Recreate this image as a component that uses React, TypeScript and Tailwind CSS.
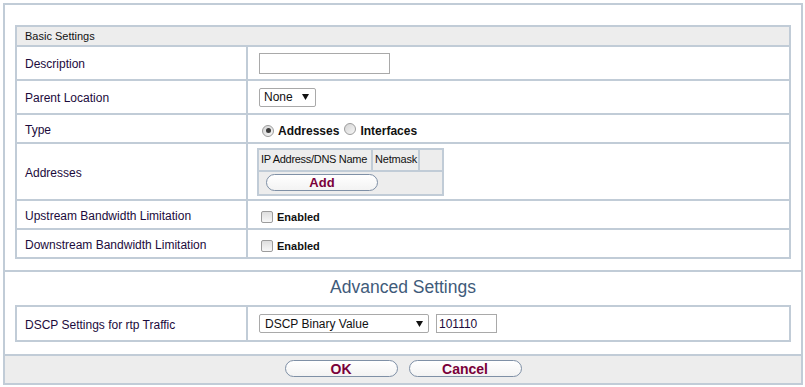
import React from "react";

const B = "bg-[#c1ccd7]";

function Arrow() {
  return (
    <svg width="7" height="6" viewBox="0 0 7 6" className="shrink-0">
      <polygon points="0,0 7,0 3.5,6" fill="#111" />
    </svg>
  );
}

function Radio({ checked }: { checked?: boolean }) {
  return (
    <span className="inline-flex w-[12px] h-[12px] shrink-0 items-center justify-center rounded-full border border-[#9c9c9c] bg-gradient-to-br from-[#d4d4d4] to-[#f6f6f6]">
      {checked && <span className="block w-[5px] h-[5px] rounded-full bg-[#3a3a3a]" />}
    </span>
  );
}

function Checkbox() {
  return (
    <span className="inline-block w-[12px] h-[12px] shrink-0 rounded-[2px] border border-[#9c9c9c] bg-gradient-to-b from-[#dedede] to-[#f8f8f8]" />
  );
}

function Btn({ children, w, cls }: { children: React.ReactNode; w: string; cls?: string }) {
  return (
    <button
      className={`${w} h-[17px] rounded-full border border-[#7f90a6] bg-gradient-to-b from-white to-[#f3f3f3] font-bold text-[#7a0039] leading-none flex items-center justify-center ${cls ?? ""}`}
    >
      {children}
    </button>
  );
}

function Label({ children, h }: { children: React.ReactNode; h: string }) {
  return (
    <div className={`bg-white ${h} flex items-center pl-[8px] pt-[2px] text-[12px] text-[#1c0b3c]`}>{children}</div>
  );
}

export default function App() {
  return (
    <div className="pt-[3px] pl-[3px] font-['Liberation_Sans',Arial,sans-serif] text-[#1c0b3c]">
      <div className="w-[800px] border-2 border-[#c1ccd7] bg-white">
        {/* Basic settings */}
        <div className="px-[10px] pt-[20px] pb-[11px]">
          <div className={`grid grid-cols-[229px_541px] gap-[2px] p-[2px] ${B}`}>
            <div className="col-span-2 h-[18px] bg-[#ededed] flex items-center pl-[8px] text-[11px] text-[#111]">
              Basic Settings
            </div>

            <Label h="h-[32px]">Description</Label>
            <div className="bg-white h-[32px] flex items-center pl-[11px]">
              <input className="w-[131px] h-[21px] border border-[#a9a9a9] bg-white outline-none" />
            </div>

            <Label h="h-[32px]">Parent Location</Label>
            <div className="bg-white h-[32px] flex items-center pl-[11px]">
              <div className="w-[57px] h-[19px] border border-[#a9a9a9] rounded-[2px] bg-white flex items-center justify-between pl-[4px] pr-[6px] text-[12px] text-[#111]">
                <span>None</span>
                <Arrow />
              </div>
            </div>

            <Label h="h-[27px]">Type</Label>
            <div className="bg-white h-[27px] flex items-center pl-[14px] pt-[4px] text-[12px] font-bold text-[#111]">
              <Radio checked />
              <span className="ml-[4px]">Addresses</span>
              <span className="ml-[5px]">
                <Radio />
              </span>
              <span className="ml-[4px]">Interfaces</span>
            </div>

            <Label h="h-[55px]">Addresses</Label>
            <div className="bg-white h-[55px] flex items-center pl-[9px]">
              <div className={`grid grid-cols-[112px_45px_22px] grid-rows-[20px_22px] gap-[2px] p-[2px] ${B}`}>
                <div className="bg-[#ededed] flex items-center pl-[2px] text-[11px] text-[#111] whitespace-nowrap tracking-[-0.3px]">
                  IP Address/DNS Name
                </div>
                <div className="bg-[#ededed] flex items-center pl-[2px] text-[11px] text-[#111] tracking-[-0.2px]">Netmask</div>
                <div className="bg-[#ededed]" />
                <div className="col-span-3 bg-[#ededed] flex items-center pl-[7px]">
                  <Btn w="w-[112px]" cls="text-[13px]">
                    Add
                  </Btn>
                </div>
              </div>
            </div>

            <Label h="h-[27px]">Upstream Bandwidth Limitation</Label>
            <div className="bg-white h-[27px] flex items-center pl-[13px] pt-[5px] text-[11px] font-bold text-[#111]">
              <Checkbox />
              <span className="ml-[4px]">Enabled</span>
            </div>

            <Label h="h-[27px]">Downstream Bandwidth Limitation</Label>
            <div className="bg-white h-[27px] flex items-center pl-[13px] pt-[5px] text-[11px] font-bold text-[#111]">
              <Checkbox />
              <span className="ml-[4px]">Enabled</span>
            </div>
          </div>
        </div>

        {/* Advanced settings */}
        <div className="border-t-2 border-[#c1ccd7]">
          <div className="h-[33px] flex items-center justify-center pb-[3px] text-[17.5px] text-[#3f5b7a]">
            Advanced Settings
          </div>
          <div className="px-[10px] pb-[12px]">
            <div className={`grid grid-cols-[229px_541px] gap-[2px] p-[2px] ${B}`}>
              <Label h="h-[33px]">DSCP Settings for rtp Traffic</Label>
              <div className="bg-white h-[33px] flex items-center pl-[11px] text-[12px] text-[#111]">
                <div className="w-[170px] h-[19px] border border-[#a9a9a9] rounded-[2px] bg-white flex items-center justify-between pl-[5px] pr-[5px]">
                  <span>DSCP Binary Value</span>
                  <Arrow />
                </div>
                <div className="ml-[7px] w-[61px] h-[19px] border border-[#a9a9a9] bg-white flex items-center pl-[2px] text-[#1c0b3c]">
                  101110
                </div>
              </div>
            </div>
          </div>
        </div>

        {/* Footer */}
        <div className="border-t-2 border-[#c1ccd7] bg-[#ededed] h-[29px] flex items-center justify-center gap-[11px] pb-[2px]">
          <Btn w="w-[113px]" cls="text-[14px]">
            OK
          </Btn>
          <Btn w="w-[113px]" cls="text-[14px]">
            Cancel
          </Btn>
        </div>
      </div>
    </div>
  );
}
